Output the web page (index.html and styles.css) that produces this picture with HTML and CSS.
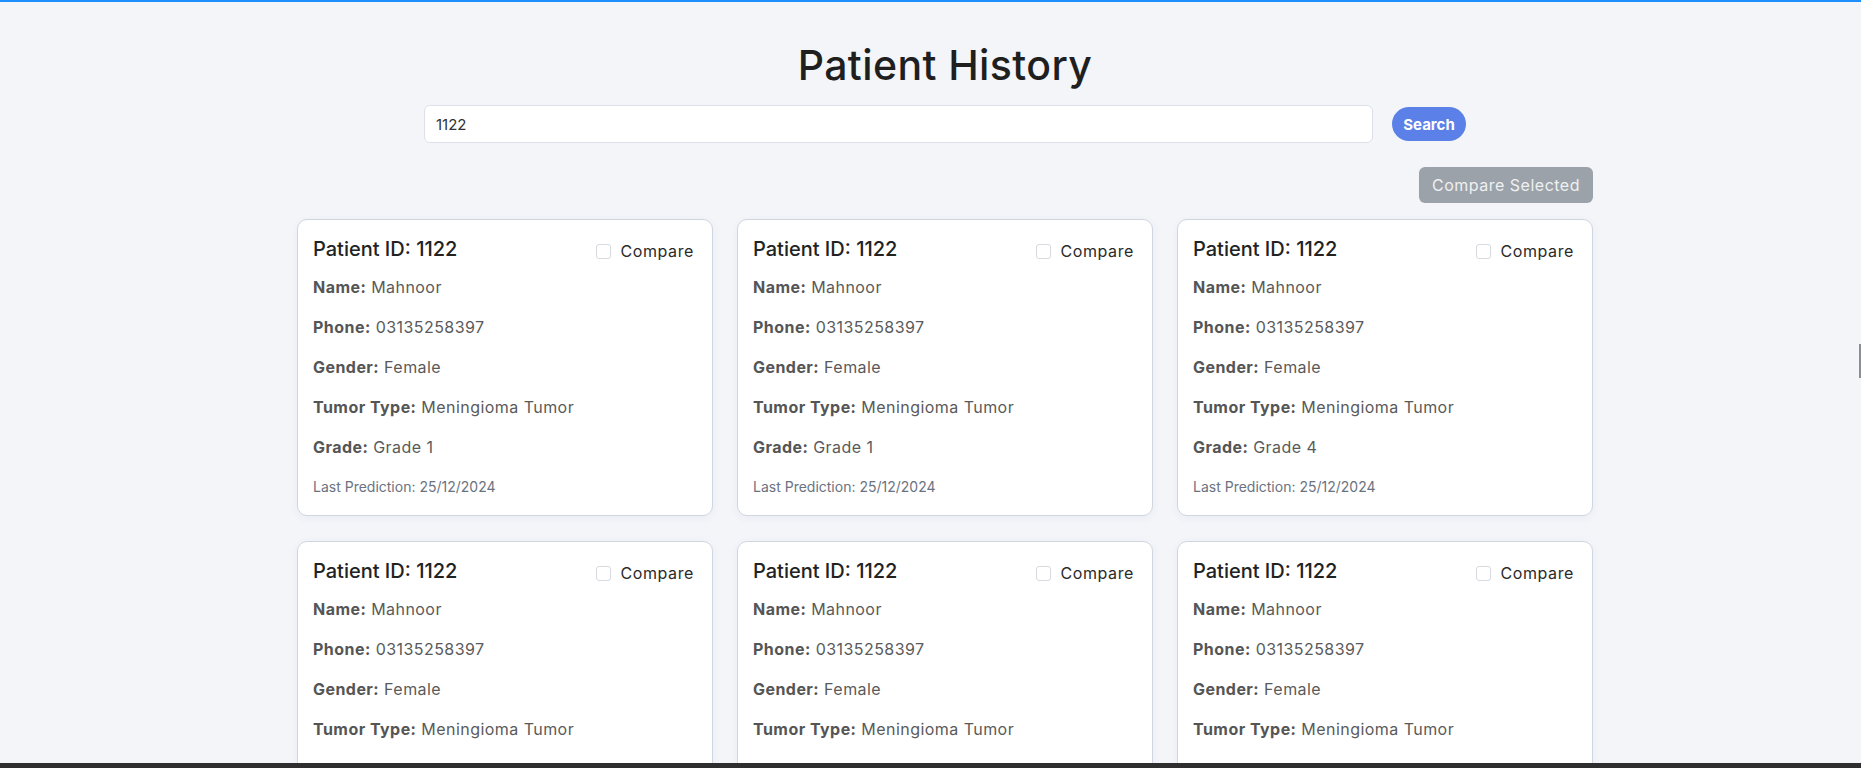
FILE: index.html
```html
<!DOCTYPE html>
<html lang="en">
<head>
<meta charset="utf-8">
<title>Patient History</title>
<link rel="stylesheet" href="styles.css">
</head>
<body>
<div class="page">
  <main class="content">
    <h1 class="title">Patient History</h1>
    <div class="search-row">
      <input class="search-input" type="text" value="1122">
      <button class="search-btn">Search</button>
    </div>
    <div class="actions">
      <button class="compare-btn">Compare Selected</button>
    </div>
    <div class="grid">
      <div class="card">
        <div class="card-head"><h3 class="card-title">Patient ID: 1122</h3><label class="cmp"><span class="box"></span>Compare</label></div>
        <p class="row"><b>Name:</b> Mahnoor</p>
        <p class="row"><b>Phone:</b> 03135258397</p>
        <p class="row"><b>Gender:</b> Female</p>
        <p class="row"><b>Tumor Type:</b> Meningioma Tumor</p>
        <p class="row"><b>Grade:</b> Grade 1</p>
        <p class="date">Last Prediction: 25/12/2024</p>
      </div>
      <div class="card">
        <div class="card-head"><h3 class="card-title">Patient ID: 1122</h3><label class="cmp"><span class="box"></span>Compare</label></div>
        <p class="row"><b>Name:</b> Mahnoor</p>
        <p class="row"><b>Phone:</b> 03135258397</p>
        <p class="row"><b>Gender:</b> Female</p>
        <p class="row"><b>Tumor Type:</b> Meningioma Tumor</p>
        <p class="row"><b>Grade:</b> Grade 1</p>
        <p class="date">Last Prediction: 25/12/2024</p>
      </div>
      <div class="card">
        <div class="card-head"><h3 class="card-title">Patient ID: 1122</h3><label class="cmp"><span class="box"></span>Compare</label></div>
        <p class="row"><b>Name:</b> Mahnoor</p>
        <p class="row"><b>Phone:</b> 03135258397</p>
        <p class="row"><b>Gender:</b> Female</p>
        <p class="row"><b>Tumor Type:</b> Meningioma Tumor</p>
        <p class="row"><b>Grade:</b> Grade 4</p>
        <p class="date">Last Prediction: 25/12/2024</p>
      </div>
      <div class="card">
        <div class="card-head"><h3 class="card-title">Patient ID: 1122</h3><label class="cmp"><span class="box"></span>Compare</label></div>
        <p class="row"><b>Name:</b> Mahnoor</p>
        <p class="row"><b>Phone:</b> 03135258397</p>
        <p class="row"><b>Gender:</b> Female</p>
        <p class="row"><b>Tumor Type:</b> Meningioma Tumor</p>
        <p class="row"><b>Grade:</b> Grade 1</p>
        <p class="date">Last Prediction: 25/12/2024</p>
      </div>
      <div class="card">
        <div class="card-head"><h3 class="card-title">Patient ID: 1122</h3><label class="cmp"><span class="box"></span>Compare</label></div>
        <p class="row"><b>Name:</b> Mahnoor</p>
        <p class="row"><b>Phone:</b> 03135258397</p>
        <p class="row"><b>Gender:</b> Female</p>
        <p class="row"><b>Tumor Type:</b> Meningioma Tumor</p>
        <p class="row"><b>Grade:</b> Grade 1</p>
        <p class="date">Last Prediction: 25/12/2024</p>
      </div>
      <div class="card">
        <div class="card-head"><h3 class="card-title">Patient ID: 1122</h3><label class="cmp"><span class="box"></span>Compare</label></div>
        <p class="row"><b>Name:</b> Mahnoor</p>
        <p class="row"><b>Phone:</b> 03135258397</p>
        <p class="row"><b>Gender:</b> Female</p>
        <p class="row"><b>Tumor Type:</b> Meningioma Tumor</p>
        <p class="row"><b>Grade:</b> Grade 1</p>
        <p class="date">Last Prediction: 25/12/2024</p>
      </div>
    </div>
  </main>
</div>
<div class="scroll-thumb"></div>
<div class="taskbar"></div>
</body>
</html>
```
FILE: styles.css
```css
* { box-sizing: border-box; }
html, body { margin: 0; padding: 0; }
body {
  background: #f3f5f9;
  font-family: "Inter", "Noto Sans", sans-serif;
  color: #222;
}
.page {
  border-top: 2px solid #1e8fff;
  min-height: 100vh;
}
.content {
  display: flex;
  flex-direction: column;
  align-items: center;
  padding-left: 29px;
  padding-top: 39px;
  padding-bottom: 40px;
}
.title {
  margin: 0;
  font-size: 41px;
  line-height: 48px;
  font-weight: 500;
  letter-spacing: 0.4px;
  color: #1f1f1f;
}
.search-row {
  display: flex;
  align-items: center;
  gap: 19px;
  margin-top: 16px;
}
.search-input {
  width: 949px;
  height: 38px;
  border: 1px solid #dde1e7;
  border-radius: 6px;
  background: #fff;
  padding: 0 11px;
  font-family: inherit;
  font-size: 15px;
  color: #333;
  outline: none;
}
.search-btn {
  width: 74px;
  height: 34px;
  border: none;
  border-radius: 17px;
  background: #5b80e8;
  color: #fff;
  font-family: inherit;
  font-weight: 700;
  font-size: 15px;
  padding: 0;
}
.actions {
  width: 1296px;
  display: flex;
  justify-content: flex-end;
  margin-top: 24px;
}
.compare-btn {
  width: 174px;
  height: 36px;
  border: none;
  border-radius: 6px;
  background: #9ca2a9;
  color: #eef0f2;
  font-family: inherit;
  font-size: 16px;
  letter-spacing: 0.5px;
  padding: 0;
}
.grid {
  width: 1296px;
  display: grid;
  grid-template-columns: repeat(3, 1fr);
  gap: 25px 24px;
  margin-top: 16px;
}
.card {
  background: #fff;
  border: 1px solid #cfd6df;
  border-radius: 10px;
  box-shadow: 0 2px 8px rgba(60, 80, 120, 0.06);
  padding: 15px 15px 18px;
  min-height: 297px;
}
.card-head {
  display: flex;
  justify-content: space-between;
  align-items: center;
  margin-bottom: 12px;
}
.card-title {
  margin: 0;
  font-size: 20px;
  line-height: 28px;
  font-weight: 500;
  color: #222;
}
.cmp {
  display: flex;
  align-items: center;
  gap: 9px;
  font-size: 16px;
  letter-spacing: 0.6px;
  color: #2a2a2a;
  margin-top: 4px;
  margin-right: 3px;
}
.box {
  width: 15px;
  height: 15px;
  border: 1px solid #d6d9de;
  border-radius: 3px;
  background: #fff;
}
.row {
  margin: 0 0 16px;
  font-size: 16px;
  line-height: 24px;
  letter-spacing: 0.45px;
  color: #5a5a5a;
}
.row b {
  color: #555;
  font-weight: 700;
}
.date {
  margin: 18px 0 0;
  font-size: 14px;
  line-height: 20px;
  color: #6b7280;
}
.scroll-thumb {
  position: fixed;
  right: 0;
  top: 344px;
  width: 2px;
  height: 34px;
  background: #8a8f96;
}
.taskbar {
  position: fixed;
  left: 0;
  right: 0;
  bottom: 0;
  height: 5px;
  background: #2e2e2e;
}
```
